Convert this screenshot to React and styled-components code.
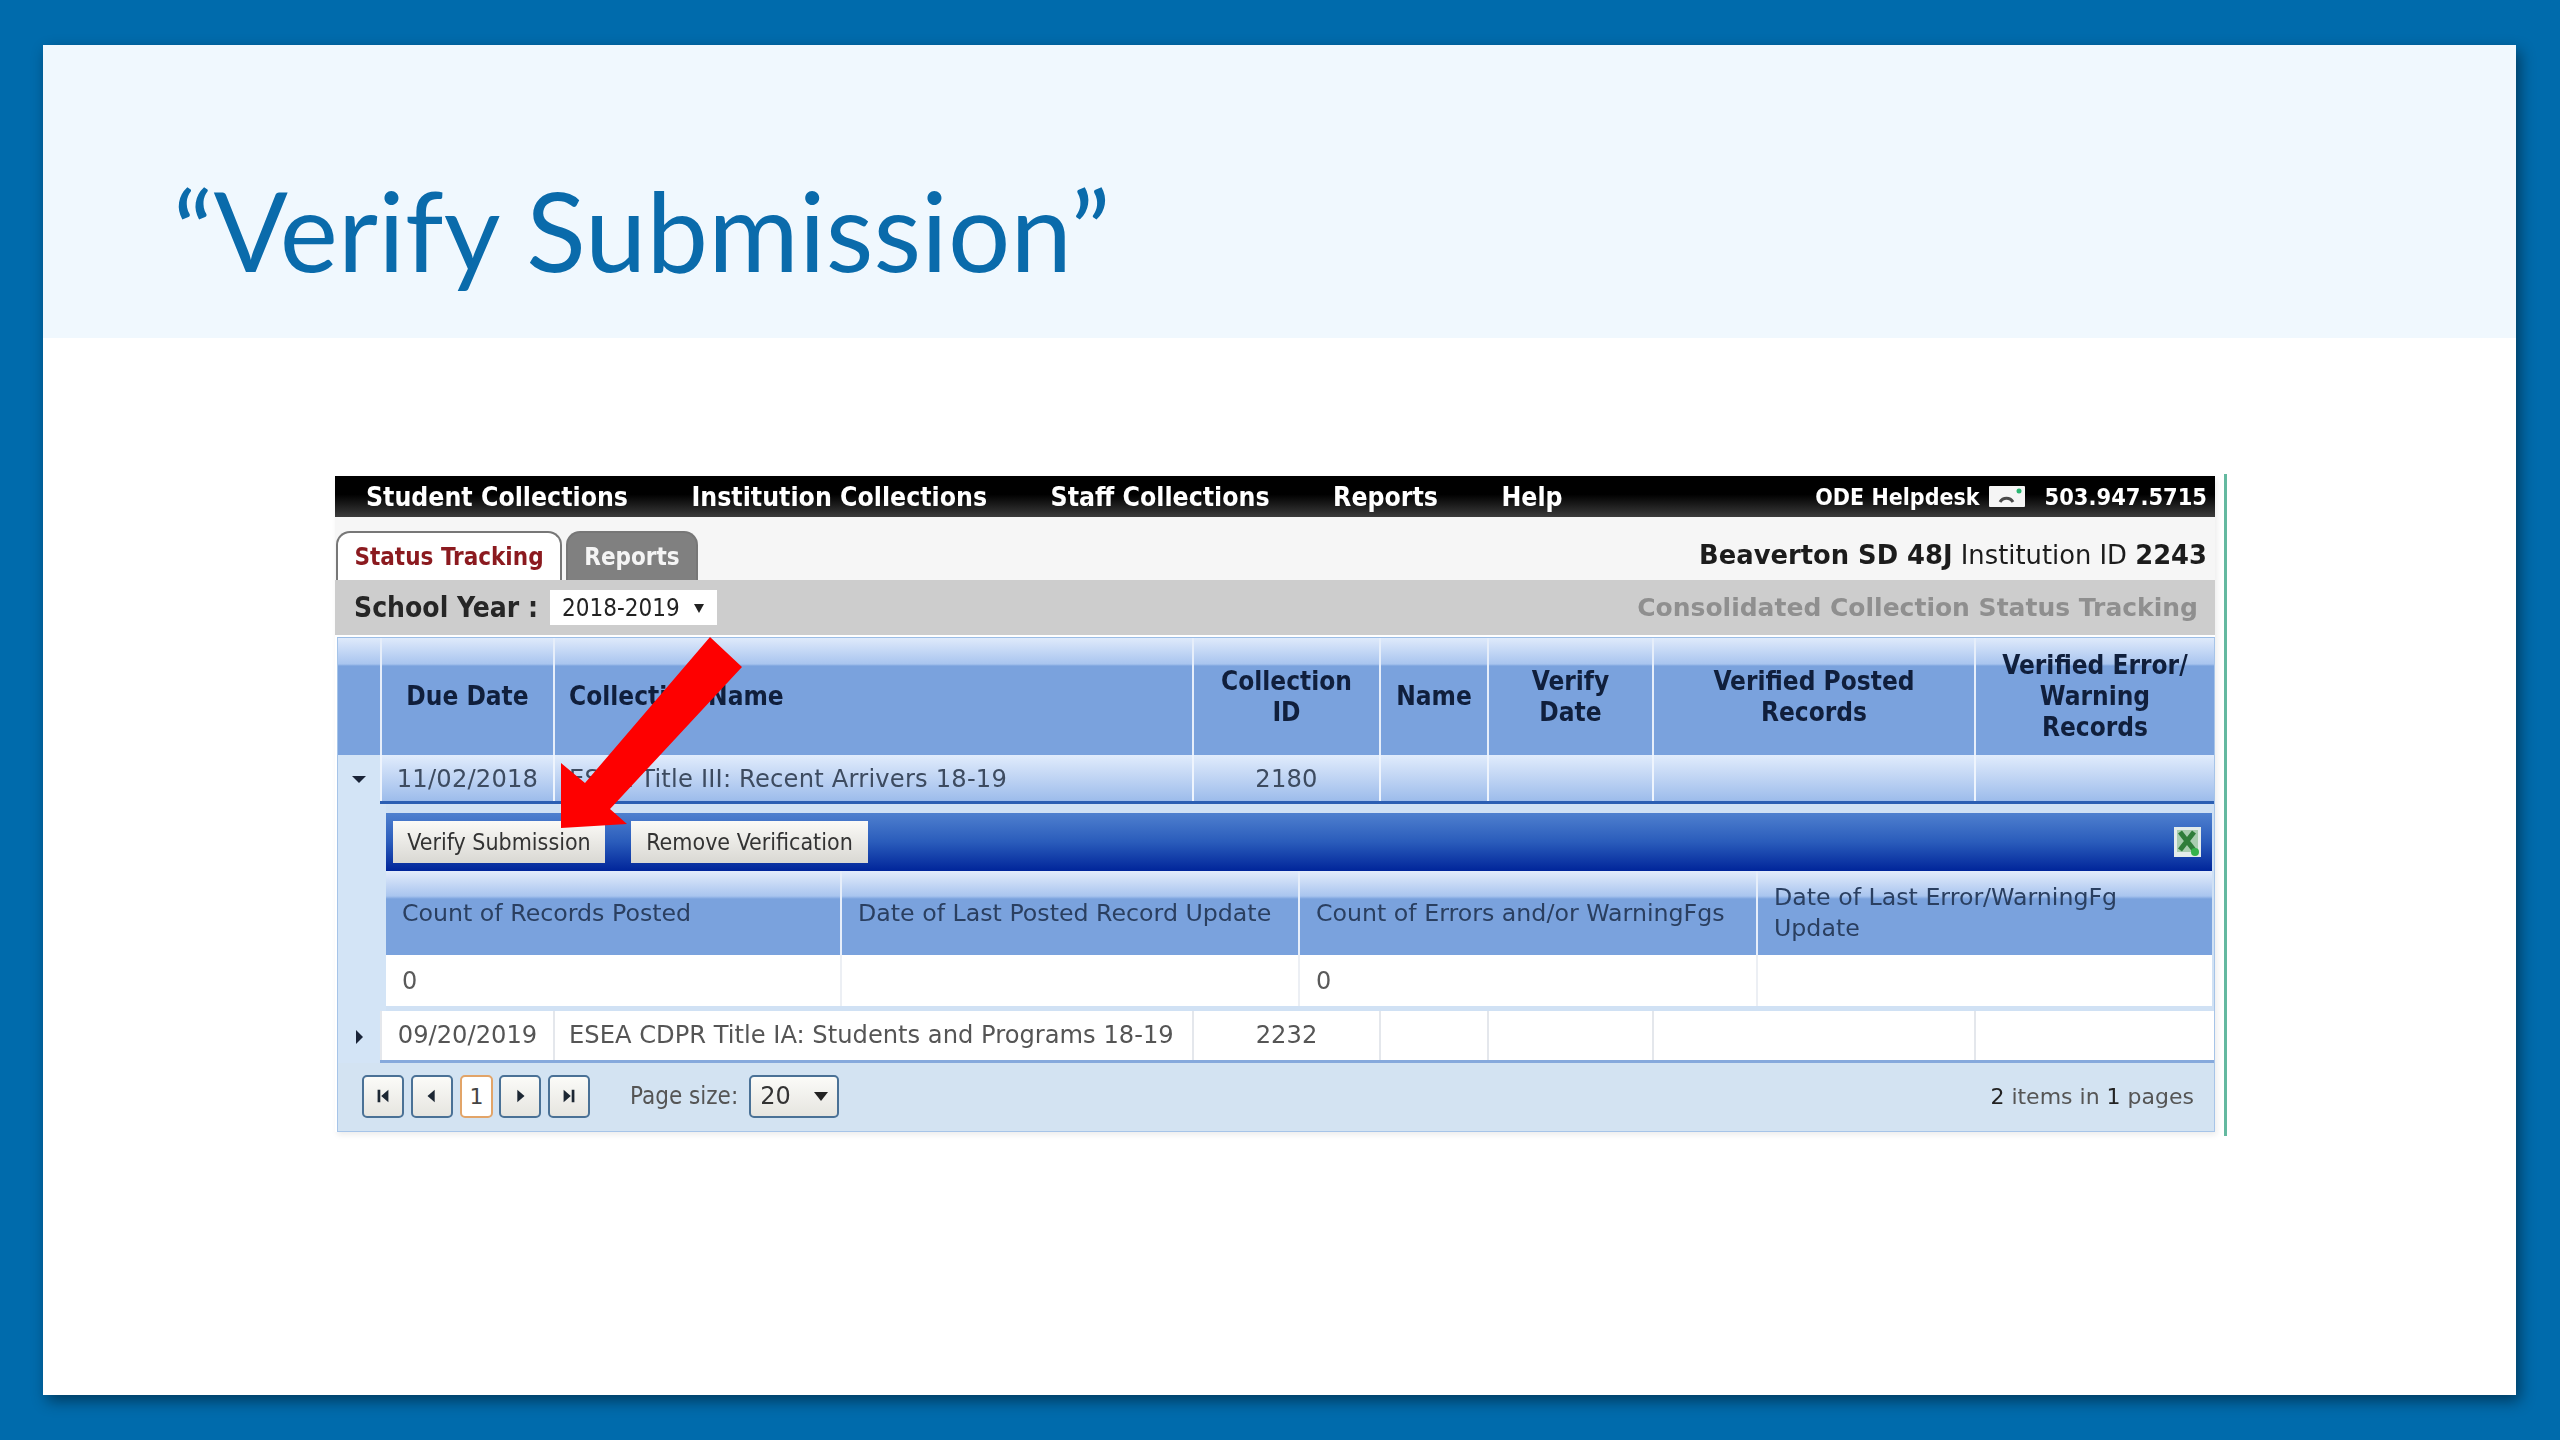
import styled, { createGlobalStyle } from "styled-components"

const GlobalStyle = createGlobalStyle`
    html, body {
        margin: 0;
        background: #006bac;
    }
    * {
        box-sizing: border-box;
    }
`

const Page = styled.div`
    width: 2560px;
    height: 1440px;
    padding: 45px 44px 45px 43px;
    background: #006bac;
    overflow: hidden;
`

const Slide = styled.div`
    height: 100%;
    background: #fff;
    box-shadow: 4px 6px 14px rgba(0, 0, 0, 0.45);
`

const SlideHeader = styled.header`
    height: 293px;
    background: #f0f8fe;
    padding: 129px 0 0 130px;
`

const Title = styled.h1`
    margin: 0;
    font-family: Lato, "Open Sans", sans-serif;
    font-weight: 400;
    font-size: 110px;
    line-height: 110px;
    letter-spacing: 0.2px;
    color: #0a6bab;
`

const SlideBody = styled.main`
    padding: 136px 0 0 292px;
`

const Shot = styled.div`
    position: relative;
    width: 1892px;
    padding: 2px 9px 4px 0;
    border-right: 3px solid #64b9a0;
`

const Frame = styled.div`
    font-family: "DejaVu Sans", sans-serif;
    box-shadow: 2px 3px 6px rgba(0, 0, 0, 0.08);
    filter: blur(0.6px);
`

const MenuBar = styled.nav`
    height: 41px;
    display: flex;
    align-items: center;
    gap: 63.5px;
    padding: 0 8px 0 31px;
    background: linear-gradient(#000 0%, #000 45%, #3c3c3c 100%);
    color: #fff;
    font-stretch: condensed;
    font-weight: 700;
    font-size: 26.4px;
`

const MenuItem = styled.span`
    white-space: nowrap;
`

const Helpdesk = styled.div`
    margin-left: auto;
    display: flex;
    align-items: center;
    font-size: 23px;
    gap: 9px;
`

const Phone = styled.span`
    margin-left: 11px;
    font-size: 23.4px;
`

const TabRow = styled.div`
    height: 63px;
    display: flex;
    align-items: flex-end;
    gap: 4px;
    padding: 0 8px 0 1px;
    background: #f6f6f6;
`

const Tab = styled.div`
    height: 49px;
    display: flex;
    align-items: center;
    justify-content: center;
    width: ${(p) => p.$width}px;
    border: 2px solid #777;
    border-bottom: none;
    border-radius: 14px 14px 0 0;
    background: ${(p) => (p.$active ? "#fff" : "#808080")};
    color: ${(p) => (p.$active ? "#8b1a1f" : "#f4f4f4")};
    font-stretch: condensed;
    font-weight: 700;
    font-size: 24px;
`

const Institution = styled.div`
    margin-left: auto;
    align-self: center;
    padding-top: 12px;
    font-size: 25.8px;
    color: #1c1c1c;

    b {
        font-weight: 700;
    }
`

const YearBar = styled.div`
    height: 55px;
    display: flex;
    align-items: center;
    padding: 0 17px 0 19px;
    background: #cdcdcd;
`

const YearLabel = styled.span`
    font-weight: 700;
    font-size: 28px;
    font-stretch: condensed;
    color: #262626;
`

const YearSelect = styled.div`
    margin-left: 12px;
    width: 167px;
    height: 35px;
    display: flex;
    align-items: center;
    justify-content: space-between;
    padding: 0 12px;
    background: #fff;
    font-size: 24px;
    font-stretch: condensed;
    color: #222;
`

const Consolidated = styled.span`
    margin-left: auto;
    font-weight: 700;
    font-size: 25px;
    color: #8f8f8f;
`

const Grid = styled.div`
    margin: 2px 0 0 2px;
    border: 1px solid #a6c4e8;
    border-top-color: #9bbde6;
`

const columns = "42px 173px 639px 187px 108px 165px 322px 1fr"

const HeadRow = styled.div`
    display: grid;
    grid-template-columns: ${columns};
    height: 117px;
    background: linear-gradient(#dfeafb 0, #a9c5ef 26px, #7aa2dd 28px, #7aa2dd 100%);
`

const HeadCell = styled.div`
    display: flex;
    align-items: center;
    justify-content: ${(p) => (p.$left ? "flex-start" : "center")};
    padding: 0 ${(p) => (p.$left ? "14px" : "6px")};
    border-left: ${(p) => (p.$first ? "none" : "2px solid #e6eefa")};
    text-align: ${(p) => (p.$left ? "left" : "center")};
    font-weight: 700;
    font-size: 26px;
    line-height: 31px;
    font-stretch: condensed;
    color: #101f3c;
`

const BodyRow = styled.div`
    display: grid;
    grid-template-columns: ${columns};
    height: ${(p) => (p.$open ? 49 : 52)}px;
    font-size: 24.2px;
    letter-spacing: ${(p) => (p.$open ? "0.2px" : "0")};
    color: ${(p) => (p.$open ? "#3d4b60" : "#555")};
    background: ${(p) => (p.$open ? "linear-gradient(#e1ecfc, #9dbceb)" : "#fff")};
    border-bottom: ${(p) => (p.$open ? "3px solid #2c5fb3" : "3px solid #86a9dc")};
`

const BodyCell = styled.div`
    display: flex;
    align-items: center;
    justify-content: ${(p) => (p.$center ? "center" : "flex-start")};
    padding: ${(p) => (p.$open ? "2px 14px 0" : "0 14px 2px")};
    border-left: 2px solid ${(p) => (p.$open ? "#eef4fd" : "#e4e7ec")};
    white-space: nowrap;
`

const ToggleCell = styled.div`
    display: flex;
    align-items: center;
    justify-content: center;
    background: #d3e4f6;
    margin-bottom: -3px;
`

const Caret = styled.span`
    width: 0;
    height: 0;
    border-style: solid;
    border-color: transparent;
    ${(p) =>
        p.$open
            ? "border-width: 7px 7px 0 7px; border-top-color: #1a2438;"
            : "border-width: 7px 0 7px 7px; border-left-color: #1a2438;"}
`

const Detail = styled.div`
    display: grid;
    grid-template-columns: 48px 1fr;
    height: 207px;
    background: #d0e1f4;
`

const DetailGutter = styled.div`
    background: #d3e4f6;
`

const DetailBody = styled.div`
    padding: 9px 2px 5px 0;
    display: flex;
    flex-direction: column;
`

const Toolbar = styled.div`
    height: 58px;
    flex: none;
    display: flex;
    align-items: center;
    padding: 0 11px 0 7px;
    gap: 26px;
    background: linear-gradient(#4f80cf 0%, #2a5cbb 50%, #00259a 100%);
`

const ToolButton = styled.button`
    height: 42px;
    width: ${(p) => p.$width}px;
    padding: 0;
    border: none;
    background: linear-gradient(#fbfaf7, #d9d8d3);
    font-family: "DejaVu Sans", sans-serif;
    font-stretch: condensed;
    font-size: 23px;
    color: #333;
`

const ExcelIcon = styled.svg`
    margin-left: auto;
`

const subColumns = "454px 458px 458px 1fr"

const SubHead = styled.div`
    display: grid;
    grid-template-columns: ${subColumns};
    height: 84px;
    background: linear-gradient(#e3ecfb 0, #a9c5ef 25px, #7aa2dd 28px, #7aa2dd 100%);
`

const SubHeadCell = styled.div`
    padding: ${(p) => (p.$tall ? "11px 16px 0" : "27px 16px 0")};
    border-left: ${(p) => (p.$first ? "none" : "2px solid #e6eefa")};
    font-size: 23.7px;
    line-height: 31px;
    white-space: nowrap;
    color: #2a3f60;
`

const SubRow = styled.div`
    display: grid;
    grid-template-columns: ${subColumns};
    flex: 1;
    background: #fff;
    color: #5a5a5a;
    font-size: 24px;
`

const SubCell = styled.div`
    display: flex;
    align-items: center;
    padding: 0 16px;
    border-left: ${(p) => (p.$first ? "none" : "2px solid #eceff4")};
`

const Pager = styled.div`
    height: 68px;
    display: flex;
    align-items: center;
    padding: 0 20px 2px 24px;
    background: #d3e3f2;
    color: #555;
    font-size: 22px;
`

const PagerButton = styled.div`
    width: ${(p) => p.$width || 42}px;
    height: 43px;
    margin-right: ${(p) => p.$gap ?? 7}px;
    display: flex;
    align-items: center;
    justify-content: center;
    border: 2px solid ${(p) => (p.$current ? "#e2a468" : "#4a7196")};
    border-radius: 5px;
    background: ${(p) => (p.$current ? "#fff" : "linear-gradient(#fbfbf8, #e6e5e0)")};
    color: #444;
    font-size: 22px;
`

const PageLabel = styled.span`
    margin-left: 40px;
    font-size: 24px;
    font-stretch: condensed;
`

const PageSize = styled.div`
    margin-left: 11px;
    width: 90px;
    height: 43px;
    display: flex;
    align-items: center;
    justify-content: space-between;
    padding: 0 9px 0 9px;
    border: 2px solid #4a7196;
    border-radius: 5px;
    background: linear-gradient(#fbfbf8, #e6e5e0);
    font-size: 24px;
    color: #333;
`

const PageInfo = styled.span`
    margin-left: auto;
    font-size: 22px;
    b {
        font-weight: 400;
        color: #222;
    }
`

const Arrow = styled.svg`
    position: absolute;
    left: 0;
    top: 0;
    pointer-events: none;
`

const pagerPaths = {
    first: "M4 3h3v14H4zM16 3v14L8 10z",
    prev: "M13 3v14L5 10z",
    next: "M7 3v14l8-7z",
    last: "M4 3v14l8-7zM13 3h3v14h-3z",
}

function PagerIcon({ name }) {
    return (
        <svg width="18" height="18" viewBox="0 0 20 20">
            <path d={pagerPaths[name]} fill="#1c2733" />
        </svg>
    )
}

export default function App() {
    return (
        <>
            <GlobalStyle />
            <Page>
                <Slide>
                    <SlideHeader>
                        <Title>“Verify Submission”</Title>
                    </SlideHeader>
                    <SlideBody>
                        <Shot>
                            <Frame>
                                <MenuBar>
                                    <MenuItem>Student Collections</MenuItem>
                                    <MenuItem>Institution Collections</MenuItem>
                                    <MenuItem>Staff Collections</MenuItem>
                                    <MenuItem>Reports</MenuItem>
                                    <MenuItem>Help</MenuItem>
                                    <Helpdesk>
                                        <MenuItem>ODE Helpdesk</MenuItem>
                                        <svg width="36" height="21" viewBox="0 0 36 21">
                                            <rect width="36" height="21" rx="1" fill="#f5f5f5" />
                                            <path d="M11 16c3-5 10-5 13 0" fill="none" stroke="#4a4a4a" strokeWidth="3" />
                                            <circle cx="30" cy="5" r="2.5" fill="#2bb673" />
                                        </svg>
                                        <Phone>503.947.5715</Phone>
                                    </Helpdesk>
                                </MenuBar>
                                <TabRow>
                                    <Tab $active $width={226}>Status Tracking</Tab>
                                    <Tab $width={132}>Reports</Tab>
                                    <Institution>
                                        <b>Beaverton SD 48J</b> Institution ID <b>2243</b>
                                    </Institution>
                                </TabRow>
                                <YearBar>
                                    <YearLabel>School Year :</YearLabel>
                                    <YearSelect>
                                        2018-2019
                                        <svg width="12" height="10" viewBox="0 0 12 10">
                                            <path d="M1 1h10L6 10z" fill="#222" />
                                        </svg>
                                    </YearSelect>
                                    <Consolidated>Consolidated Collection Status Tracking</Consolidated>
                                </YearBar>
                                <Grid>
                                    <HeadRow>
                                        <HeadCell $first />
                                        <HeadCell>Due Date</HeadCell>
                                        <HeadCell $left>Collection Name</HeadCell>
                                        <HeadCell>Collection<br />ID</HeadCell>
                                        <HeadCell>Name</HeadCell>
                                        <HeadCell>Verify<br />Date</HeadCell>
                                        <HeadCell>Verified Posted<br />Records</HeadCell>
                                        <HeadCell>Verified Error/<br />Warning<br />Records</HeadCell>
                                    </HeadRow>
                                    <BodyRow $open>
                                        <ToggleCell><Caret $open /></ToggleCell>
                                        <BodyCell $open $center>11/02/2018</BodyCell>
                                        <BodyCell $open>ESEA Title III: Recent Arrivers 18-19</BodyCell>
                                        <BodyCell $open $center>2180</BodyCell>
                                        <BodyCell $open />
                                        <BodyCell $open />
                                        <BodyCell $open />
                                        <BodyCell $open />
                                    </BodyRow>
                                    <Detail>
                                        <DetailGutter />
                                        <DetailBody>
                                            <Toolbar>
                                                <ToolButton $width={212}>Verify Submission</ToolButton>
                                                <ToolButton $width={237}>Remove Verification</ToolButton>
                                                <ExcelIcon width="27" height="30" viewBox="0 0 27 30">
                                                    <rect width="27" height="30" fill="#e4ecea" />
                                                    <rect x="3" y="3" width="21" height="22" fill="#a9cdb0" />
                                                    <path d="M6 5l14 18M20 5L6 23" stroke="#2f7d3a" strokeWidth="5" />
                                                    <circle cx="21" cy="25" r="4" fill="#35b24a" />
                                                </ExcelIcon>
                                            </Toolbar>
                                            <SubHead>
                                                <SubHeadCell $first>Count of Records Posted</SubHeadCell>
                                                <SubHeadCell>Date of Last Posted Record Update</SubHeadCell>
                                                <SubHeadCell>Count of Errors and/or WarningFgs</SubHeadCell>
                                                <SubHeadCell $tall>Date of Last Error/WarningFg<br />Update</SubHeadCell>
                                            </SubHead>
                                            <SubRow>
                                                <SubCell $first>0</SubCell>
                                                <SubCell />
                                                <SubCell>0</SubCell>
                                                <SubCell />
                                            </SubRow>
                                        </DetailBody>
                                    </Detail>
                                    <BodyRow>
                                        <ToggleCell><Caret /></ToggleCell>
                                        <BodyCell $center>09/20/2019</BodyCell>
                                        <BodyCell>ESEA CDPR Title IA: Students and Programs 18-19</BodyCell>
                                        <BodyCell $center>2232</BodyCell>
                                        <BodyCell />
                                        <BodyCell />
                                        <BodyCell />
                                        <BodyCell />
                                    </BodyRow>
                                    <Pager>
                                        <PagerButton><PagerIcon name="first" /></PagerButton>
                                        <PagerButton><PagerIcon name="prev" /></PagerButton>
                                        <PagerButton $current $width={33} $gap={6}>1</PagerButton>
                                        <PagerButton><PagerIcon name="next" /></PagerButton>
                                        <PagerButton $gap={0}><PagerIcon name="last" /></PagerButton>
                                        <PageLabel>Page size:</PageLabel>
                                        <PageSize>
                                            20
                                            <svg width="14" height="9" viewBox="0 0 14 9">
                                                <path d="M0 0h14L7 9z" fill="#222" />
                                            </svg>
                                        </PageSize>
                                        <PageInfo><b>2</b> items in <b>1</b> pages</PageInfo>
                                    </Pager>
                                </Grid>
                            </Frame>
                            <Arrow width="1892" height="670" viewBox="335 474 1892 670">
                                <polygon points="710,637 742,667 610,809 627,824 561,828 561,763 585,783" fill="#fe0000" />
                            </Arrow>
                        </Shot>
                    </SlideBody>
                </Slide>
            </Page>
        </>
    )
}
